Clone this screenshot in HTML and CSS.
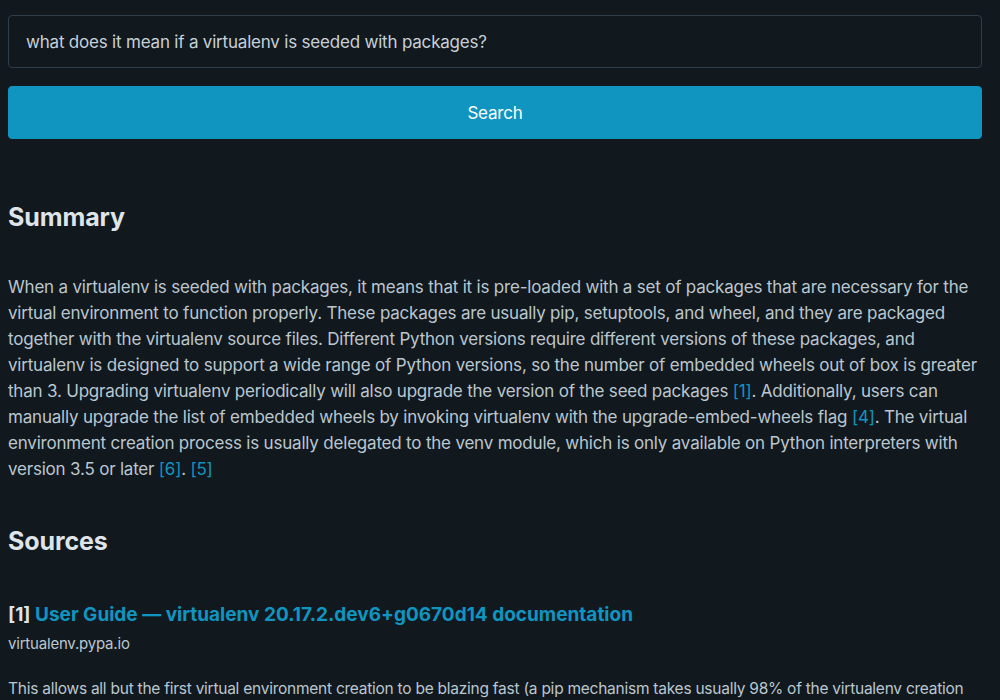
FILE: index.html
```html
<!DOCTYPE html>
<html lang="en">
<head>
<meta charset="utf-8">
<title>Search</title>
<link rel="stylesheet" href="styles.css">
</head>
<body>
<main class="page">
  <form class="search">
    <input class="search-input" type="text" value="what does it mean if a virtualenv is seeded with packages?">
    <button class="search-button" type="button">Search</button>
  </form>

  <h2 class="section-title summary-title">Summary</h2>
  <p class="summary">When a virtualenv is seeded with packages, it means that it is pre-loaded with a set of packages that are necessary for the virtual environment to function properly. These packages are usually pip, setuptools, and wheel, and they are packaged together with the virtualenv source files. Different Python versions require different versions of these packages, and virtualenv is designed to support a wide range of Python versions, so the number of embedded wheels out of box is greater than 3. Upgrading virtualenv periodically will also upgrade the version of the seed packages <a href="#s1">[1]</a>. Additionally, users can manually upgrade the list of embedded wheels by invoking virtualenv with the upgrade-embed-wheels flag <a href="#s4">[4]</a>. The virtual environment creation process is usually delegated to the venv module, which is only available on Python interpreters with version 3.5 or later <a href="#s6">[6]</a>. <a href="#s5">[5]</a></p>

  <h2 class="section-title sources-title">Sources</h2>
  <article class="source" id="s1">
    <h4 class="source-title">[1] <a href="#">User Guide — virtualenv 20.17.2.dev6+g0670d14 documentation</a></h4>
    <div class="source-host">virtualenv.pypa.io</div>
    <p class="source-text">This allows all but the first virtual environment creation to be blazing fast (a pip mechanism takes usually 98% of the virtualenv creation time, so by creating them once and reusing them we can speed this up).</p>
  </article>
</main>
</body>
</html>
```
FILE: styles.css
```css
html, body {
  margin: 0;
  padding: 0;
  background: #11191f;
}
body {
  font-family: Inter, "Noto Sans", "Liberation Sans", sans-serif;
  font-size: 17px;
  line-height: 26px;
  letter-spacing: -0.2px;
  color: #bbc6ce;
}
.page {
  padding: 15px 18px 0 8px;
}
.search {
  display: flex;
  flex-direction: column;
  gap: 18px;
  margin: 0;
}
.search-input {
  box-sizing: border-box;
  height: 53px;
  padding: 0 17px;
  background: #11191f;
  border: 1px solid #2f3e4a;
  border-radius: 4px;
  color: #c7d0d8;
  font-family: inherit;
  font-size: 17px;
  letter-spacing: -0.2px;
  outline: none;
}
.search-button {
  box-sizing: border-box;
  height: 53px;
  background: #1095c1;
  border: 1px solid #1095c1;
  border-radius: 4px;
  color: #ffffff;
  font-family: inherit;
  font-size: 17px;
  letter-spacing: -0.2px;
}
.section-title {
  margin: 0;
  font-size: 25px;
  line-height: 31px;
  font-weight: 700;
  color: #dfe4e9;
  letter-spacing: -0.1px;
}
.summary-title {
  margin-top: 63px;
}
.summary {
  margin: 41px 0 0;
}
a {
  color: #1095c1;
  text-decoration: none;
}
.sources-title {
  margin-top: 44px;
}
.source-title {
  margin: 45px 0 0;
  font-size: 19px;
  line-height: 26px;
  font-weight: 700;
  letter-spacing: 0;
  color: #dfe4e9;
}
.source-host {
  margin-top: 5px;
  font-size: 15px;
  line-height: 22px;
  color: #bbc6ce;
}
.source-text {
  margin: 22px 0 0;
  font-size: 15.5px;
  line-height: 24px;
  letter-spacing: -0.25px;
}
```
